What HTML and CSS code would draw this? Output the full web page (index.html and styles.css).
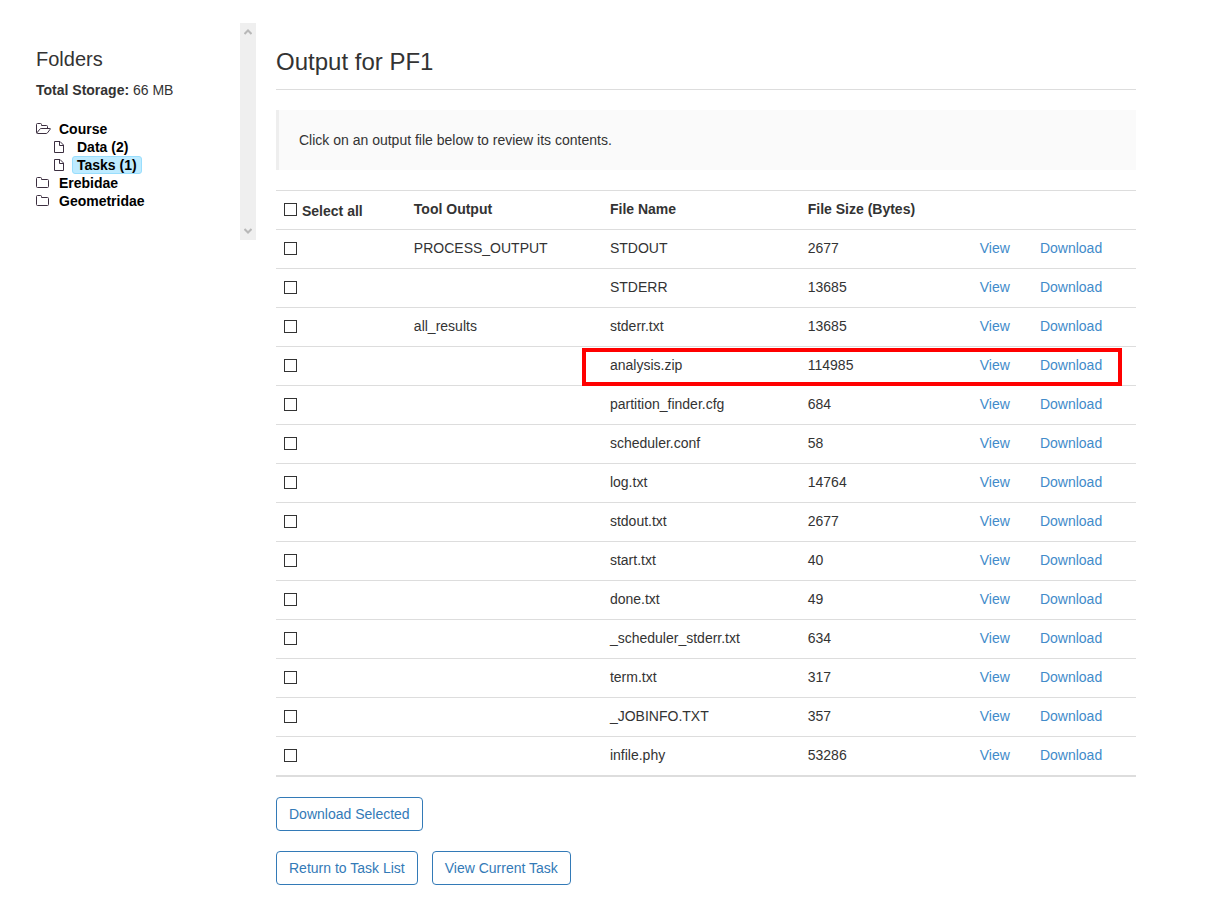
FILE: index.html
```html
<!DOCTYPE html>
<html lang="en">
<head>
<meta charset="utf-8">
<title>Output for PF1</title>
<link rel="stylesheet" href="styles.css">
</head>
<body>
<svg class="symbols" aria-hidden="true">
  <symbol id="folder" viewBox="0 0 15 12"><path d="M.5 9.500V1.500q0-1 1-1h3q1 0 1 1v1h6q1 0 1 1v6q0 1-1 1h-10q-1 0-1-1z"/></symbol>
  <symbol id="folder-open" viewBox="0 0 15 12"><path d="M.5 9.500V1.500q0-1 1-1h3q1 0 1 1v1h5q1 0 1 1v2M.8 10L3.800 6.200q.5-.7 1.300-.7h8.800q.8 0 .3.700L11.500 9.800q-.5.700-1.300.7H1.500q-1 0-1-1"/></symbol>
  <symbol id="file" viewBox="0 0 12 12"><path d="M.5.5h5.500l3.500 3.500v7.500h-9zM5.500.5v4h4"/></symbol>
</svg>
<div class="page">
  <aside class="sidebar">
    <div class="folders">
      <h2 class="folders-title">Folders</h2>
      <p class="storage"><strong>Total Storage:</strong> 66 MB</p>
      <ul class="tree">
        <li><a class="node" href="#"><svg class="icon"><use href="#folder-open"/></svg><span class="name">Course</span></a>
          <ul class="subtree">
            <li><a class="node" href="#"><svg class="icon file"><use href="#file"/></svg><span class="name">Data (2)</span></a></li>
            <li><a class="node" href="#"><svg class="icon file"><use href="#file"/></svg><span class="name selected">Tasks (1)</span></a></li>
          </ul>
        </li>
        <li><a class="node" href="#"><svg class="icon"><use href="#folder"/></svg><span class="name">Erebidae</span></a></li>
        <li><a class="node" href="#"><svg class="icon"><use href="#folder"/></svg><span class="name">Geometridae</span></a></li>
      </ul>
    </div>
    <div class="scroll-track" aria-hidden="true">
      <svg class="arrow" viewBox="0 0 8 6"><path d="M.5 5L4 1.500 7.500 5"/></svg>
      <svg class="arrow" viewBox="0 0 8 6"><path d="M.5 1L4 4.500 7.500 1"/></svg>
    </div>
  </aside>
  <main class="content">
    <h1 class="title">Output for PF1</h1>
    <p class="notice">Click on an output file below to review its contents.</p>
    <table class="outputs">
      <colgroup><col class="c-select"><col class="c-tool"><col class="c-name"><col class="c-size"><col class="c-view"><col class="c-download"></colgroup>
      <thead>
        <tr><th><label class="select-all"><input class="check" type="checkbox"><span>Select all</span></label></th><th>Tool Output</th><th>File Name</th><th>File Size (Bytes)</th><th></th><th></th></tr>
      </thead>
      <tbody>
        <tr><td><input class="check" type="checkbox" aria-label="Select STDOUT"></td><td>PROCESS_OUTPUT</td><td>STDOUT</td><td>2677</td><td><a href="#">View</a></td><td><a href="#">Download</a></td></tr>
        <tr><td><input class="check" type="checkbox" aria-label="Select STDERR"></td><td></td><td>STDERR</td><td>13685</td><td><a href="#">View</a></td><td><a href="#">Download</a></td></tr>
        <tr><td><input class="check" type="checkbox" aria-label="Select stderr.txt"></td><td>all_results</td><td>stderr.txt</td><td>13685</td><td><a href="#">View</a></td><td><a href="#">Download</a></td></tr>
        <tr class="marked"><td><input class="check" type="checkbox" aria-label="Select analysis.zip"></td><td></td><td>analysis.zip</td><td>114985</td><td><a href="#">View</a></td><td><a href="#">Download</a></td></tr>
        <tr><td><input class="check" type="checkbox" aria-label="Select partition_finder.cfg"></td><td></td><td>partition_finder.cfg</td><td>684</td><td><a href="#">View</a></td><td><a href="#">Download</a></td></tr>
        <tr><td><input class="check" type="checkbox" aria-label="Select scheduler.conf"></td><td></td><td>scheduler.conf</td><td>58</td><td><a href="#">View</a></td><td><a href="#">Download</a></td></tr>
        <tr><td><input class="check" type="checkbox" aria-label="Select log.txt"></td><td></td><td>log.txt</td><td>14764</td><td><a href="#">View</a></td><td><a href="#">Download</a></td></tr>
        <tr><td><input class="check" type="checkbox" aria-label="Select stdout.txt"></td><td></td><td>stdout.txt</td><td>2677</td><td><a href="#">View</a></td><td><a href="#">Download</a></td></tr>
        <tr><td><input class="check" type="checkbox" aria-label="Select start.txt"></td><td></td><td>start.txt</td><td>40</td><td><a href="#">View</a></td><td><a href="#">Download</a></td></tr>
        <tr><td><input class="check" type="checkbox" aria-label="Select done.txt"></td><td></td><td>done.txt</td><td>49</td><td><a href="#">View</a></td><td><a href="#">Download</a></td></tr>
        <tr><td><input class="check" type="checkbox" aria-label="Select _scheduler_stderr.txt"></td><td></td><td>_scheduler_stderr.txt</td><td>634</td><td><a href="#">View</a></td><td><a href="#">Download</a></td></tr>
        <tr><td><input class="check" type="checkbox" aria-label="Select term.txt"></td><td></td><td>term.txt</td><td>317</td><td><a href="#">View</a></td><td><a href="#">Download</a></td></tr>
        <tr><td><input class="check" type="checkbox" aria-label="Select _JOBINFO.TXT"></td><td></td><td>_JOBINFO.TXT</td><td>357</td><td><a href="#">View</a></td><td><a href="#">Download</a></td></tr>
        <tr><td><input class="check" type="checkbox" aria-label="Select infile.phy"></td><td></td><td>infile.phy</td><td>53286</td><td><a href="#">View</a></td><td><a href="#">Download</a></td></tr>
      </tbody>
    </table>
    <div class="actions"><button class="btn" type="button">Download Selected</button></div>
    <div class="actions"><button class="btn" type="button">Return to Task List</button><button class="btn" type="button">View Current Task</button></div>
  </main>
</div>
</body>
</html>
```
FILE: styles.css
```css
*, *::after { box-sizing: border-box; }
body {
  margin: 0;
  background: #fff;
  color: #333;
  font: 14px/20px "Liberation Sans", Arial, sans-serif;
}
a { color: #428bca; text-decoration: none; }
.symbols { display: none; }
.page {
  display: flex;
  align-items: flex-start;
  gap: 20px;
  padding: 23px 94px 20px 36px;
}

.sidebar { display: flex; flex: 0 0 220px; }
.folders { flex: 1; padding: 24px 0 30px; }
.folders-title { margin: 0 0 9px; font-size: 20px; line-height: 24px; font-weight: 400; }
.storage { margin: 0 0 20px; }
.tree, .subtree { margin: 0; padding: 0; list-style: none; }
.subtree { padding-left: 18px; }
.node { display: flex; align-items: center; height: 18px; color: #000; font-weight: 700; }
.icon { width: 15px; height: 12px; margin-right: 3px; fill: none; stroke: #3c2f40; stroke-width: 1; }
.icon.file { width: 12px; margin-right: 6px; }
.name { padding: 0 4px; border: 1px solid transparent; border-radius: 3px; line-height: 16px; }
.name.selected { background: #beebff; border-color: #99defd; }
.scroll-track {
  display: flex;
  flex-direction: column;
  justify-content: space-between;
  align-items: center;
  width: 16px;
  padding: 6px 0;
  background: #efefef;
}
.arrow { width: 8px; height: 6px; fill: none; stroke: #b8b8b8; stroke-width: 2; }

.content { flex: 1; min-width: 0; }
.title {
  margin: 0 0 20px;
  padding: 24px 0 12px;
  border-bottom: 1px solid #ddd;
  font-size: 24px;
  line-height: 30px;
  font-weight: 400;
}
.notice { margin: 0 0 20px; padding: 20px; border-left: 3px solid #eee; background: #fafafa; }
.outputs {
  width: 100%;
  margin-bottom: 20px;
  border-spacing: 0;
  border-bottom: 2px solid #ddd;
  table-layout: fixed;
}
.c-select { width: 15.1%; }
.c-tool { width: 22.8%; }
.c-name { width: 23%; }
.c-size { width: 20%; }
.c-view { width: 7%; }
.c-download { width: 12.1%; }
.outputs th, .outputs td {
  height: 39px;
  padding: 8px;
  border-top: 1px solid #ddd;
  text-align: left;
  vertical-align: top;
}
.check {
  appearance: none;
  display: block;
  width: 13px;
  height: 13px;
  margin: 4px 0;
  border: 1px solid #333;
  background: #fff;
}
.check:checked { background: #337ab7; }
.select-all { display: flex; align-items: flex-start; gap: 5px; }
.select-all span { padding-top: 2px; }
.marked { position: relative; }
.marked::after {
  content: "";
  position: absolute;
  top: 2px;
  left: 35.6%;
  right: 14px;
  height: 38px;
  border: 4px solid #f00;
  pointer-events: none;
}

.actions { display: flex; gap: 14px; margin-bottom: 20px; }
.btn {
  height: 34px;
  padding: 0 12px;
  border: 1px solid #337ab7;
  border-radius: 4px;
  background: #fff;
  color: #337ab7;
  font: inherit;
}
```
